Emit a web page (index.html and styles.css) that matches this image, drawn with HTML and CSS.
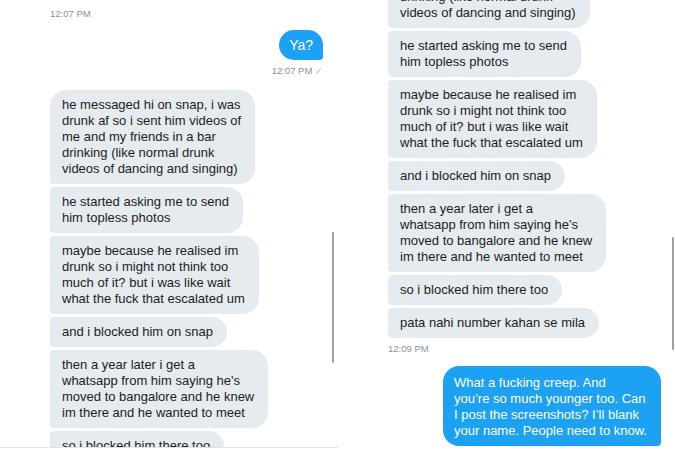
FILE: index.html
```html
<!DOCTYPE html>
<html>
<head>
<meta charset="utf-8">
<link rel="stylesheet" href="styles.css">
</head>
<body>
<div class="page">
  <section class="panel left">
    <div class="frag"></div>
    <div class="time first-time">12:07 PM</div>
    <div class="msg sent ya">Ya?</div>
    <div class="time right">12:07 PM <span class="tick">✓</span></div>
    <div class="list first">
      <div class="msg recv">he messaged hi on snap, i was<br>drunk af so i sent him videos of<br>me and my friends in a bar<br>drinking (like normal drunk<br>videos of dancing and singing)</div>
      <div class="msg recv">he started asking me to send<br>him topless photos</div>
      <div class="msg recv">maybe because he realised im<br>drunk so i might not think too<br>much of it? but i was like wait<br>what the fuck that escalated um</div>
      <div class="msg recv">and i blocked him on snap</div>
      <div class="msg recv">then a year later i get a<br>whatsapp from him saying he's<br>moved to bangalore and he knew<br>im there and he wanted to meet</div>
      <div class="msg recv">so i blocked him there too</div>
    </div>
    <div class="scrollbar sb-left"></div>
  </section>
  <section class="panel rightp">
    <div class="list top">
      <div class="msg recv">drinking (like normal drunk<br>videos of dancing and singing)</div>
      <div class="msg recv">he started asking me to send<br>him topless photos</div>
      <div class="msg recv">maybe because he realised im<br>drunk so i might not think too<br>much of it? but i was like wait<br>what the fuck that escalated um</div>
      <div class="msg recv">and i blocked him on snap</div>
      <div class="msg recv">then a year later i get a<br>whatsapp from him saying he's<br>moved to bangalore and he knew<br>im there and he wanted to meet</div>
      <div class="msg recv">so i blocked him there too</div>
      <div class="msg recv last">pata nahi number kahan se mila</div>
    </div>
    <div class="time t2">12:09 PM</div>
    <div class="msg sent big">What a fucking creep. And<br>you’re so much younger too. Can<br>I post the screenshots? I’ll blank<br>your name. People need to know.</div>
    <div class="scrollbar sb-right"></div>
  </section>
</div>
</body>
</html>
```

FILE: styles.css
```css
* { box-sizing: border-box; }
html, body { margin: 0; padding: 0; background: #fff; }
body {
  width: 675px;
  height: 450px;
  overflow: hidden;
  font-family: "Liberation Sans", Arial, sans-serif;
  color: #1c1f23;
}
.page {
  display: flex;
  gap: 2px;
  height: 450px;
}
.panel {
  position: relative;
  overflow: hidden;
  display: flex;
  flex-direction: column;
}
.left {
  width: 338px;
  height: 448px;
  padding: 0 15px 0 50px;
  border-bottom: 1px solid #dfe2e6;
}
.rightp {
  width: 335px;
  height: 450px;
  padding: 0 14px 0 48px;
}
.frag {
  height: 2px;
  width: 183px;
  background: #e9edf1;
  border-radius: 0 0 6px 6px;
}
.time {
  font-size: 9.5px;
  line-height: 12px;
  color: #8a9199;
  margin-top: 6px;
}
.first-time { margin-top: 8px; }
.time.right {
  align-self: flex-end;
  margin-top: 5px;
}
.tick { color: #b0b7be; font-size: 9px; }
.msg {
  font-size: 13px;
  line-height: 16px;
  white-space: nowrap;
  align-self: flex-start;
}
.recv {
  background: #e6ebf0;
  color: #1a1d21;
  padding: 7px 14px 7px 12px;
  border-radius: 4px 16px 16px 4px;
}
.list { display: flex; flex-direction: column; gap: 3px; align-items: flex-start; }
.list.first { margin-top: 13px; }
.list.first .recv:first-child { border-top-left-radius: 16px; }
.list.top { margin-top: -18px; }
.sent {
  background: #1da1f2;
  color: #fff;
  border-radius: 16px 16px 4px 16px;
  align-self: flex-end;
}
.ya {
  margin-top: 10px;
  padding: 7px 10px;
  font-size: 14px;
}
.t2 { margin-top: 5px; }
.big {
  margin-top: 11px;
  padding: 9px 12px 7px 11px;
  width: 218px;
}
.scrollbar {
  position: absolute;
  width: 2px;
  background: #9d9fa2;
  border-radius: 1px;
}
.sb-left { left: 332px; top: 232px; height: 131px; }
.sb-right { left: 332px; top: 237px; height: 113px; }
```
